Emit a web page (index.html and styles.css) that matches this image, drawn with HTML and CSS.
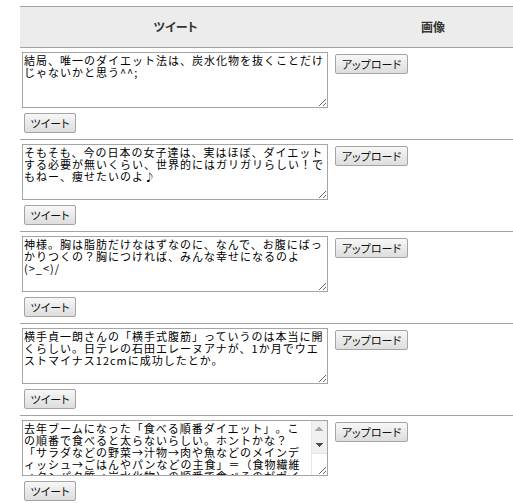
FILE: index.html
```html
<!DOCTYPE html>
<html lang="ja">
<head>
<meta charset="utf-8">
<title>ツイート</title>
<link rel="stylesheet" href="styles.css">
</head>
<body>
<div class="page">
  <table class="tweets">
    <thead>
      <tr>
        <th class="col-tweet">ツイート</th>
        <th class="col-image">画像</th>
      </tr>
    </thead>
    <tbody>
      <tr>
        <td class="cell-tweet">
          <textarea class="tweet-text">結局、唯一のダイエット法は、炭水化物を抜くことだけじゃないかと思う^^;</textarea>
          <button class="btn btn-tweet" type="button">ツイート</button>
        </td>
        <td class="cell-image"><button class="btn btn-upload" type="button">アップロード</button></td>
      </tr>
      <tr>
        <td class="cell-tweet">
          <textarea class="tweet-text">そもそも、今の日本の女子達は、実はほぼ、ダイエットする必要が無いくらい、世界的にはガリガリらしい！でもねー、痩せたいのよ♪</textarea>
          <button class="btn btn-tweet" type="button">ツイート</button>
        </td>
        <td class="cell-image"><button class="btn btn-upload" type="button">アップロード</button></td>
      </tr>
      <tr>
        <td class="cell-tweet">
          <textarea class="tweet-text">神様。胸は脂肪だけなはずなのに、なんで、お腹にばっかりつくの？胸につければ、みんな幸せになるのよ(&gt;_&lt;)/</textarea>
          <button class="btn btn-tweet" type="button">ツイート</button>
        </td>
        <td class="cell-image"><button class="btn btn-upload" type="button">アップロード</button></td>
      </tr>
      <tr>
        <td class="cell-tweet">
          <textarea class="tweet-text">横手貞一朗さんの「横手式腹筋」っていうのは本当に開くらしい。日テレの石田エレーヌアナが、1か月でウエストマイナス12cmに成功したとか。</textarea>
          <button class="btn btn-tweet" type="button">ツイート</button>
        </td>
        <td class="cell-image"><button class="btn btn-upload" type="button">アップロード</button></td>
      </tr>
      <tr>
        <td class="cell-tweet">
          <div class="scroll-wrap">
            <textarea class="tweet-text tweet-text--scroll">去年ブームになった「食べる順番ダイエット」。この順番で食べると太らないらしい。ホントかな？「サラダなどの野菜→汁物→肉や魚などのメインディッシュ→ごはんやパンなどの主食」＝（食物繊維→タンパク質→炭水化物）の順番で食べるのがポイントなんだって。</textarea>
            <div class="fake-scrollbar" aria-hidden="true">
              <span class="sb-btn sb-up"></span>
              <span class="sb-btn sb-down"></span>
            </div>
          </div>
          <button class="btn btn-tweet" type="button">ツイート</button>
        </td>
        <td class="cell-image"><button class="btn btn-upload" type="button">アップロード</button></td>
      </tr>
    </tbody>
  </table>
</div>
</body>
</html>
```
FILE: styles.css
```css
html, body {
  margin: 0;
  padding: 0;
  background: #fff;
}

body {
  font-family: "Noto Sans CJK JP", "Noto Sans", sans-serif;
  font-size: 12px;
  color: #000;
}

.page {
  padding: 6px 0 0 20px;
  overflow: hidden;
}

.tweets {
  border-collapse: collapse;
  border-spacing: 0;
  width: 515px;
  table-layout: fixed;
}

.tweets th {
  height: 40px;
  padding: 0;
  background: #ececec;
  border-top: 1px solid #a3a3a3;
  border-bottom: 1px solid #a3a3a3;
  font-size: 12px;
  font-weight: bold;
  color: #333;
  text-align: center;
  vertical-align: middle;
  font-feature-settings: "palt";
  line-height: 12px;
}

.col-tweet {
  width: 311px;
}

.col-image {
  width: 204px;
}

.tweets tbody tr {
  border-bottom: 1px solid #a3a3a3;
}

.cell-tweet {
  padding: 4px 3px 6px 2px;
  vertical-align: top;
}

.cell-image {
  padding: 6px 0 0 4px;
  vertical-align: top;
}

.tweet-text {
  display: block;
  box-sizing: border-box;
  width: 306px;
  height: 56px;
  margin: 0;
  padding: 1px;
  border: 1px solid #a5a5a5;
  font-family: "Noto Sans CJK JP", sans-serif;
  font-size: 11px;
  letter-spacing: 1px;
  line-height: 12px;
  color: #000;
  background: #fff;
  overflow: hidden;
  text-spacing-trim: space-all;
}

.scroll-wrap {
  position: relative;
  width: 306px;
}

.tweet-text--scroll {
  padding-right: 17px;
}

.fake-scrollbar {
  position: absolute;
  top: 1px;
  right: 1px;
  bottom: 1px;
  width: 16px;
  border-left: 1px solid #e6e6e6;
  box-sizing: border-box;
  pointer-events: none;
  display: flex;
  flex-direction: column;
}

.sb-btn {
  display: block;
  height: 16px;
  background-color: #f0f0f0;
  background-repeat: no-repeat;
  background-size: 4px 4px;
}

.sb-up {
  background-image:
    linear-gradient(to bottom right, transparent 50%, #a8a8a8 50%),
    linear-gradient(to bottom left, transparent 50%, #a8a8a8 50%);
  background-position: 3px 6px, 7px 6px;
}

.sb-down {
  background-image:
    linear-gradient(to top right, transparent 50%, #4a4a4a 50%),
    linear-gradient(to top left, transparent 50%, #4a4a4a 50%);
  background-position: 3px 6px, 7px 6px;
  border-bottom: 1px solid #e6e6e6;
}

.btn {
  display: block;
  box-sizing: border-box;
  height: 20px;
  margin: 0;
  padding: 0;
  border: 1px solid #a4a4a4;
  border-radius: 2px;
  background: linear-gradient(#f7f7f7, #dddddd);
  font-family: "Noto Sans CJK JP", sans-serif;
  font-size: 11px;
  line-height: 16px;
  color: #111;
  font-feature-settings: "palt";
  text-align: center;
}

.btn-tweet {
  width: 52px;
  margin: 5px 0 0 2px;
}

.btn-upload {
  width: 73px;
}
```
